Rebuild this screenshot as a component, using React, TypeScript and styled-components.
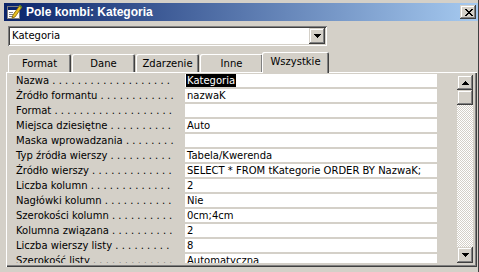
import styled, { createGlobalStyle } from 'styled-components';

const GRAY = '#D4D0C8';
const DARK = '#404040';
const SHADOW = '#808080';
const FONT = `'DejaVu Sans', Verdana, sans-serif`;

const GlobalStyle = createGlobalStyle`
  html, body { margin: 0; padding: 0; background: ${GRAY}; }
  body { font-family: ${FONT}; font-size: 10px; color: #000; }
  * { box-sizing: border-box; }
`;

const raised = `
  box-shadow: inset -1px -1px ${DARK}, inset 1px 1px ${GRAY}, inset -2px -2px ${SHADOW}, inset 2px 2px #fff;
`;

const Window = styled.div`
  width: 479px; height: 272px; overflow: hidden;
  background: ${GRAY};
  padding: 3px 1px 0 4px;
  display: flex; flex-direction: column;
  box-shadow: inset -1px 0 ${DARK};
`;

const TitleBar = styled.div`
  height: 18px; flex-shrink: 0;
  display: flex; align-items: center;
  padding: 0 2px 0 3px;
  background: linear-gradient(90deg, #0A246A 0%, #A6CAF0 100%);
`;
const TitleText = styled.div`
  flex: 1; margin-left: 3px;
  font-family: 'Liberation Sans', Arial, sans-serif;
  color: #fff; font-weight: bold; font-size: 12px; white-space: nowrap;
`;
const CloseButton = styled.div`
  width: 16px; height: 14px; background: ${GRAY};
  display: flex; align-items: center; justify-content: center;
  padding-left: 1px;
  ${raised}
`;

const Combo = styled.div`
  margin: 5px 0 0 4px; width: 319px; height: 20px; flex-shrink: 0;
  background: #fff; padding: 2px;
  display: flex; align-items: center;
  box-shadow: inset 1px 1px ${SHADOW}, inset -1px -1px #fff, inset 2px 2px ${DARK}, inset -2px -2px ${GRAY};
`;
const ComboText = styled.div`
  flex: 1; padding-left: 2px; line-height: 16px;
`;
const ComboButton = styled.div`
  width: 16px; height: 16px; background: ${GRAY};
  display: flex; align-items: center; justify-content: center;
  ${raised}
`;

const Tabs = styled.div`
  margin-top: 6px; height: 20px; flex-shrink: 0;
  display: flex; align-items: flex-end; gap: 1px;
  padding-left: 4px;
`;
const Tab = styled.div<{ $active?: boolean }>`
  width: ${(p) => (p.$active ? 67 : 63)}px;
  height: ${(p) => (p.$active ? 21 : 18)}px;
  margin: ${(p) => (p.$active ? '0 -2px -1px -2px' : '0')};
  position: relative; z-index: ${(p) => (p.$active ? 1 : 0)};
  background: ${GRAY};
  border-radius: 2px 2px 0 0;
  display: flex; align-items: center; justify-content: center;
  padding-bottom: ${(p) => (p.$active ? 2 : 0)}px;
  box-shadow: inset 1px 1px #fff, inset -1px 0 ${DARK}, inset -2px 0 ${SHADOW};
`;

const Sheet = styled.div`
  margin-left: 2px; width: 471px; height: 195px; flex-shrink: 0;
  background: ${GRAY};
  display: flex; align-items: flex-start;
  padding: 2px 0 0 1px;
  box-shadow: inset 1px 1px #fff, inset -1px -1px ${DARK}, inset -2px -2px ${SHADOW};
`;
const Rows = styled.div`
  width: 430px; height: 189px; overflow: hidden;
  display: flex; flex-direction: column;
`;
const Row = styled.div`
  height: 15px; flex-shrink: 0;
  display: grid; grid-template-columns: 178px 252px;
`;
const Label = styled.div`
  height: 13px; line-height: 13px; padding-left: 9px;
  white-space: nowrap; overflow: hidden;
`;
const Value = styled.div`
  height: 13px; line-height: 13px; background: #fff;
  padding-left: 2px; white-space: nowrap; overflow: hidden;
`;
const Selected = styled.span`
  display: inline-block; height: 13px; margin-left: -1px; padding: 0 1px;
  background: #000; color: #fff;
`;

const ScrollBar = styled.div`
  margin: 1px 0 0 20px; width: 16px; height: 188px;
  display: flex; flex-direction: column;
`;
const ScrollButton = styled.div<{ $h: number }>`
  height: ${(p) => p.$h}px; flex-shrink: 0; background: ${GRAY};
  display: flex; align-items: center; justify-content: center;
  ${raised}
`;
const Track = styled.div`
  flex: 1;
  background-image: conic-gradient(#fff 25%, ${GRAY} 0 50%, #fff 0 75%, ${GRAY} 0);
  background-size: 2px 2px;
`;

const TitleIcon = () => (
  <svg width="16" height="16" viewBox="0 0 16 16" shapeRendering="crispEdges">
    <rect x="0.5" y="2.5" width="12" height="12" fill="#fff" stroke="#808080" strokeWidth="1" />
    <rect x="1" y="3" width="11" height="3" fill="#0A246A" />
    <rect x="2" y="8" width="4" height="1" fill="#808080" />
    <rect x="2" y="10" width="4" height="1" fill="#808080" />
    <rect x="2" y="12" width="4" height="1" fill="#808080" />
    <rect x="7" y="8" width="4" height="1" fill="#A0A0A0" />
    <polygon points="6,11 13,1 15,3 8,13 5,14" fill="#E8C020" stroke="#806000" strokeWidth="0.8" shapeRendering="auto" />
    <polygon points="12,2 13,1 15,3 14,4" fill="#4A8A30" shapeRendering="auto" />
  </svg>
);

const CloseGlyph = () => (
  <svg width="8" height="7" viewBox="0 0 8 7" shapeRendering="crispEdges">
    {[0, 1, 2, 3, 4, 5, 6].map((i) => (
      <g key={i} fill="#000">
        <rect x={i} y={i} width="2" height="1" />
        <rect x={6 - i} y={i} width="2" height="1" />
      </g>
    ))}
  </svg>
);

const Arrow = ({ up }: { up?: boolean }) => (
  <svg width="7" height="4" viewBox="0 0 7 4" shapeRendering="crispEdges">
    {[0, 1, 2, 3].map((i) => {
      const w = up ? 1 + i * 2 : 7 - i * 2;
      return <rect key={i} x={(7 - w) / 2} y={i} width={w} height="1" fill="#000" />;
    })}
  </svg>
);

const TABS = ['Format', 'Dane', 'Zdarzenie', 'Inne', 'Wszystkie'];

const PROPS: [string, string][] = [
  ['Nazwa', 'Kategoria'],
  ['Źródło formantu', 'nazwaK'],
  ['Format', ''],
  ['Miejsca dziesiętne', 'Auto'],
  ['Maska wprowadzania', ''],
  ['Typ źródła wierszy', 'Tabela/Kwerenda'],
  ['Źródło wierszy', 'SELECT * FROM tKategorie ORDER BY NazwaK;'],
  ['Liczba kolumn', '2'],
  ['Nagłówki kolumn', 'Nie'],
  ['Szerokości kolumn', '0cm;4cm'],
  ['Kolumna związana', '2'],
  ['Liczba wierszy listy', '8'],
  ['Szerokość listy', 'Automatyczna'],
];

// dot leader after each label, measured so it stops short of the value column
let measureCtx: CanvasRenderingContext2D | null = null;
function withLeader(name: string, max = 159): string {
  if (!measureCtx) measureCtx = document.createElement('canvas').getContext('2d');
  if (!measureCtx) return name;
  measureCtx.font = `10px ${FONT}`;
  let s = name;
  while (measureCtx.measureText(s + ' .').width <= max) s += ' .';
  return s;
}

export default function App() {
  return (
    <>
      <GlobalStyle />
      <Window>
        <TitleBar>
          <TitleIcon />
          <TitleText>Pole kombi: Kategoria</TitleText>
          <CloseButton><CloseGlyph /></CloseButton>
        </TitleBar>

        <Combo>
          <ComboText>Kategoria</ComboText>
          <ComboButton><Arrow /></ComboButton>
        </Combo>

        <Tabs>
          {TABS.map((t) => (
            <Tab key={t} $active={t === 'Wszystkie'}>{t}</Tab>
          ))}
        </Tabs>

        <Sheet>
          <Rows>
            {PROPS.map(([name, value], i) => (
              <Row key={name}>
                <Label>{withLeader(name)}</Label>
                <Value>{i === 0 ? <Selected>{value}</Selected> : value}</Value>
              </Row>
            ))}
          </Rows>
          <ScrollBar>
            <ScrollButton $h={15}><Arrow up /></ScrollButton>
            <ScrollButton $h={15} />
            <Track />
            <ScrollButton $h={16}><Arrow /></ScrollButton>
          </ScrollBar>
        </Sheet>
      </Window>
    </>
  );
}
